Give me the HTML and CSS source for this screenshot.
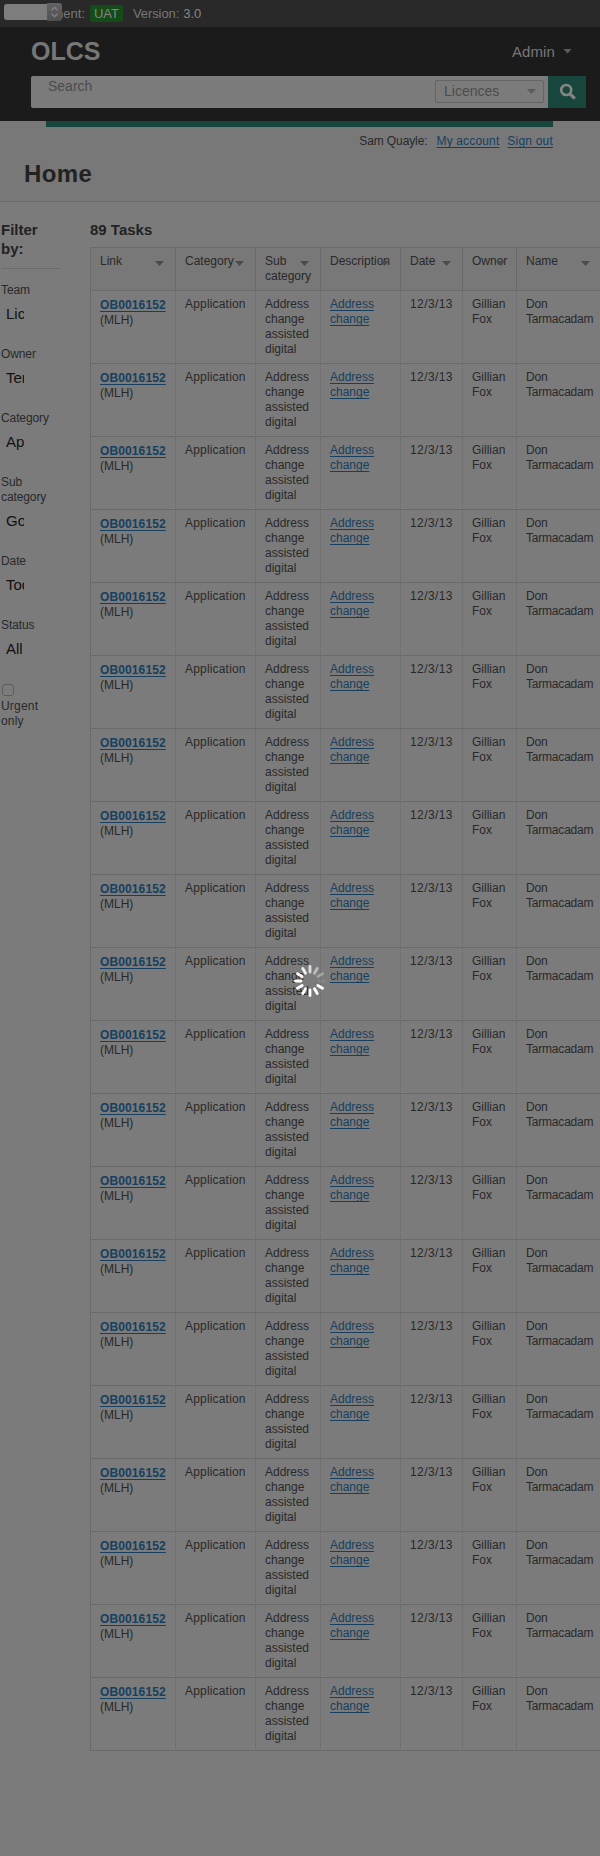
FILE: index.html
```html
<!DOCTYPE html>
<html lang="en">
<head>
<meta charset="utf-8">
<title>OLCS - Home</title>
<link rel="stylesheet" href="styles.css">
</head>
<body>
<div class="env">
  <span class="env-label">Environment:</span><span class="badge">UAT</span><span class="version">Version:</span><span class="number">3.0</span>
  <div class="picker"><span class="picker-field"></span><span class="picker-knob"><svg width="15" height="18" viewBox="0 0 15 18"><path d="M4.5 7.2 7.5 4.3l3 2.9M4.5 10.8l3 2.9 3-2.9" fill="none" stroke="#858585" stroke-width="1.2"/></svg></span></div>
</div>
<header class="header">
  <div class="brand-row"><span class="brand">OLCS</span><span class="admin">Admin<i class="arrow"></i></span></div>
  <div class="search">
    <span class="placeholder">Search</span>
    <span class="scope">Licences<i class="arrow"></i></span>
    <span class="go"><svg width="18" height="18" viewBox="0 0 18 18"><circle cx="7.2" cy="7" r="5" fill="none" stroke="#858585" stroke-width="2.6"/><path d="M10.8 10.6l5 5" stroke="#858585" stroke-width="3.2"/></svg></span>
  </div>
</header>
<div class="title-area">
  <div class="strip"></div>
  <div class="user"><span class="user-name">Sam Quayle:</span><a class="account">My account</a><a class="signout">Sign out</a></div>
  <h1 class="title">Home</h1>
</div>
<main class="main">
  <aside class="side">
    <h2 class="heading filter">Filter by:</h2>
    <div class="field"><label>Team</label><div class="value">Lic</div></div>
    <div class="field"><label>Owner</label><div class="value">Ter</div></div>
    <div class="field"><label>Category</label><div class="value">Ap</div></div>
    <div class="field"><label>Sub category</label><div class="value">Go</div></div>
    <div class="field"><label>Date</label><div class="value">Tod</div></div>
    <div class="field"><label>Status</label><div class="value">All</div></div>
    <div class="urgent"><span class="check"></span><label>Urgent only</label></div>
  </aside>
  <section class="tasks">
    <h2 class="heading">89 Tasks</h2>
    <table class="table">
      <colgroup><col class="c1"><col class="c2"><col class="c3"><col class="c4"><col class="c5"><col class="c6"><col class="c7"></colgroup>
      <thead><tr>
        <th>Link<i class="sort"></i></th><th>Category<i class="sort"></i></th><th>Sub<i class="sort"></i> category</th><th>Description<i class="sort"></i></th><th>Date<i class="sort"></i></th><th>Owner<i class="sort"></i></th><th>Name<i class="sort"></i></th>
      </tr></thead>
      <tbody id="rows"></tbody>
    </table>
  </section>
</main>
<svg class="spinner" width="36" height="36" viewBox="-18 -18 36 36" stroke="#fff" stroke-width="2.8" stroke-linecap="round" id="spinner"></svg>
<script src="app.js"></script>
</body>
</html>
```
FILE: styles.css
```css
* { box-sizing: border-box; }
body {
  position: relative;
  margin: 0;
  height: 1856px;
  overflow: hidden;
  background: #7b7b7b;
  color: #292929;
  font: 12px/15px "Liberation Sans", Arial, sans-serif;
}
h1, h2 { margin: 0; }
a { color: #163f60; text-decoration: underline; text-underline-offset: 2px; }

.env {
  position: relative;
  display: flex;
  align-items: center;
  height: 27px;
  background: #292929;
  color: #777;
  font-size: 13px;
}
.env-label { width: 85px; text-align: right; }
.badge {
  width: 33px;
  height: 17px;
  margin-left: 5px;
  border-radius: 2px;
  background: #154b16;
  color: #858585;
  line-height: 18px;
  text-align: center;
}
.version { margin-left: 10px; letter-spacing: -.1px; }
.number { margin-left: 4px; color: #868686; }
.picker { position: absolute; left: 4px; top: 3px; display: flex; align-items: center; }
.picker-field { width: 43px; height: 16px; border-radius: 3px 0 0 3px; background: #7d7d7d; }
.picker-knob { width: 15px; height: 18px; border-radius: 0 3px 3px 0; background: linear-gradient(#626264, #505053); }
.picker-knob svg { display: block; }

.header { height: 94px; padding: 11px 14px 0 31px; background: #1b1b1b; }
.brand-row { display: flex; justify-content: space-between; height: 38px; padding-right: 14px; }
.brand { color: #777; font-size: 25px; font-weight: bold; line-height: 26px; }
.admin { display: flex; align-items: center; height: 26px; color: #777; font-size: 15px; letter-spacing: .1px; }
.arrow { width: 9px; height: 5px; margin-left: 8px; background: #5c5c5c; clip-path: polygon(0 0, 100% 0, 50% 100%); }
.search { display: flex; height: 32px; border-radius: 2px; background: #7b7b7b; overflow: hidden; }
.placeholder { flex: 1; padding: 2px 0 0 17px; color: #4c4c4c; font-size: 14px; line-height: 16px; }
.scope {
  display: flex;
  align-items: center;
  justify-content: space-between;
  width: 109px;
  height: 23px;
  margin: 4px 4px 0 0;
  padding: 0 7px 0 8px;
  border: 1px solid #656565;
  border-radius: 2px;
  color: #4b4b4b;
  font-size: 14px;
}
.go { display: flex; align-items: center; justify-content: center; width: 38px; padding-left: 1px; background: #17463c; }

.title-area { height: 81px; border-bottom: 1px solid #6a6a6a; background: #787878; }
.strip { height: 6px; margin: 0 47px 0 46px; background: #17463c; }
.user { display: flex; justify-content: flex-end; padding: 7px 47px 0 0; }
.user-name { letter-spacing: -.1px; }
.account { margin-left: 9px; letter-spacing: .15px; }
.signout { margin-left: 8px; letter-spacing: .2px; }
.title { padding: 10px 0 0 24px; color: #222; font-size: 24px; line-height: 30px; letter-spacing: .4px; }

.main { display: flex; width: 602px; }
.side { width: 59px; margin-left: 1px; padding-top: 18px; }
.heading { color: #222; font-size: 15px; line-height: 19px; }
.filter { height: 49px; padding-right: 10px; border-bottom: 1px solid #6a6a6a; }
.field { padding-top: 14px; margin-bottom: 9px; }
.field + .field { padding-top: 15px; }
.field label, .urgent label { display: block; width: 50px; }
.field label { letter-spacing: -.1px; }
.urgent label { letter-spacing: .2px; }
.value { width: 18px; height: 25px; margin-left: 5px; overflow: hidden; color: #111; font-size: 15px; line-height: 31px; white-space: nowrap; }
.urgent { padding-top: 17px; }
.check { display: block; width: 12px; height: 12px; margin: 0 0 3px 1px; border: 1px solid #5c5c5c; border-radius: 3px; }

.tasks { margin-left: 30px; padding-top: 18px; }
.table {
  width: 512px;
  margin-top: 8px;
  table-layout: fixed;
  border-collapse: separate;
  border-spacing: 0;
  border-top: 1px solid #6a6a6a;
  border-left: 1px solid #6a6a6a;
  border-radius: 2px 0 0 0;
}
.c1 { width: 85px; }
.c2 { width: 80px; }
.c3 { width: 65px; }
.c4 { width: 80px; }
.c5 { width: 62px; }
.c6 { width: 54px; }
.c7 { width: 85px; }
th, td { padding: 6px 0 6px 9px; border-bottom: 1px solid #6a6a6a; vertical-align: top; text-align: left; font-weight: normal; }
th { position: relative; height: 43px; border-right: 1px solid #6a6a6a; background: #787878; }
td { height: 73px; border-right: 1px dotted #686868; }
td:nth-child(3), td:nth-child(4), td:nth-child(6) { padding-right: 8px; }
td:nth-child(2) { letter-spacing: .18px; }
td:nth-child(5) { letter-spacing: .4px; }
td:nth-child(7) { letter-spacing: -.2px; }
.sort { position: absolute; right: 11px; top: 13px; width: 9px; height: 5px; background: #4c4c4c; clip-path: polygon(0 0, 100% 0, 50% 100%); }
.licence { font-weight: bold; letter-spacing: .12px; }
.link-cell { padding-top: 7px; padding-bottom: 5px; }

.spinner { position: absolute; left: 292px; top: 963px; }
```
FILE: app.js
```javascript
const row = '<tr><td class="link-cell"><a class="licence">OB0016152</a><br>(MLH)</td><td>Application</td>' +
  '<td>Address change assisted digital</td><td><a>Address<br>change</a></td><td>12/3/13</td><td>Gillian Fox</td><td>Don Tarmacadam</td></tr>';
document.getElementById('rows').innerHTML = row.repeat(20);

// Spoke opacity, clockwise from 12 o'clock
const fade = [0.75, 0.5, 0.3, 0.08, 1, 1, 1, 1, 1, 1, 0.98, 0.9];
document.getElementById('spinner').innerHTML = fade
  .map((o, i) => `<path d="M0-9V-14.5" opacity="${o}" transform="rotate(${i * 30})"/>`)
  .join('');
```
